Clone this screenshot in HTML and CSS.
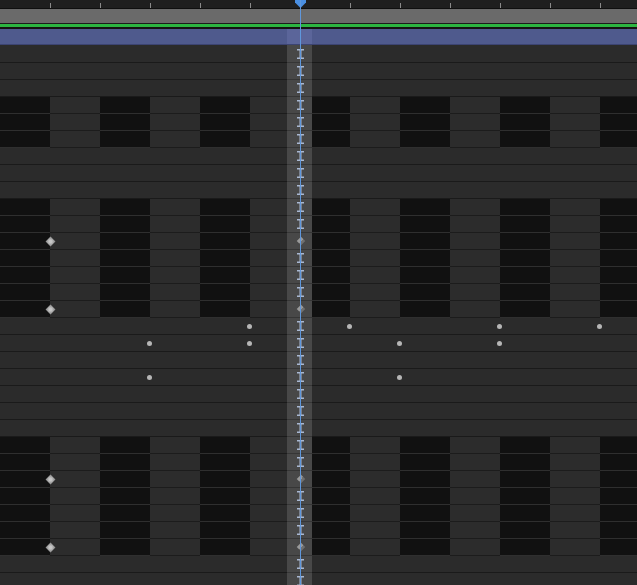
FILE: index.html
```html
<!DOCTYPE html>
<html>
<head>
  <title>Keyframe Timeline</title>
  <link rel="stylesheet" href="styles.css">
</head>
<body>
  <div class="timeline">
    <div class="ruler"></div>
    <div class="range-bar"></div>
    <div class="green-bar"></div>
    <div class="clip-bar">
      <div></div>
      <div class="clip-playhead"></div>
      <div></div>
    </div>
    <div class="tracks" id="tracks"></div>

    <div class="playhead">
      <svg class="playhead-head" width="11" height="8" viewBox="0 0 11 8">
        <path d="M0 0H11V2.5L5.5 8L0 2.5Z"/>
      </svg>
      <div class="playhead-line"></div>
    </div>
  </div>

  <script>
    const ROW_COUNT = 32;
    const checkered = [3, 4, 5, 9, 10, 11, 12, 13, 14, 15, 23, 24, 25, 26, 27, 28, 29];
    const diamondRows = [11, 15, 25, 29];
    const dots = {
      16: [249, 349, 499, 599],
      17: [149, 249, 399, 499],
      19: [149, 399]
    };

    const ibeam = '<svg class="ibeam" width="7" height="10" viewBox="0 0 7 10">' +
      '<rect x="0" y="0" width="7" height="1.5"/>' +
      '<rect x="0" y="8.5" width="7" height="1.5"/>' +
      '<rect x="2.5" y="0" width="2" height="10"/></svg>';

    const tracks = document.getElementById('tracks');

    for (let i = 0; i < ROW_COUNT; i++) {
      const row = document.createElement('div');
      row.className = 'track';
      if (checkered.includes(i)) row.classList.add('track-alt');
      if (i === 0) row.classList.add('track-first');

      const left = document.createElement('div');
      const mid = document.createElement('div');
      const right = document.createElement('div');
      mid.className = 'track-playhead';

      if (diamondRows.includes(i)) {
        mid.innerHTML = '<span class="diamond diamond-dim"></span>';
        const key = document.createElement('span');
        key.className = 'diamond key';
        key.style.left = '47px';
        row.appendChild(key);
      } else {
        mid.innerHTML = ibeam;
      }

      (dots[i] || []).forEach(function (x) {
        const dot = document.createElement('span');
        dot.className = 'dot key';
        dot.style.left = (x - 2) + 'px';
        row.appendChild(dot);
      });

      row.prepend(left, mid, right);
      tracks.appendChild(row);
    }
  </script>
</body>
</html>
```

FILE: styles.css
```css
body {
  margin: 0;
  background-color: #2b2b2b;
  font-family: "Liberation Sans", Arial, sans-serif;
  overflow: hidden;
}

.timeline {
  position: relative;
  width: 637px;
  height: 585px;
  overflow: hidden;
}

/* top ruler with a tick every 50px */
.ruler {
  height: 8px;
  padding-left: 50px;
  background-image:
    linear-gradient(to right, #8a8a8a 0 1px, transparent 1px 50px),
    linear-gradient(#1f1f1f, #1f1f1f);
  background-size: 50px 5px, 100% 100%;
  background-position: 0 3px, 0 0;
  background-repeat: repeat-x, no-repeat;
  background-origin: content-box, border-box;
  background-clip: content-box, border-box;
  border-bottom: 1px solid #0f0f0f;
}

.range-bar {
  height: 14px;
  background-color: #6a6a6a;
  border-bottom: 1px solid #1b1b1b;
}

.green-bar {
  height: 3px;
  background-color: #2cb541;
  border-bottom: 2px solid #141414;
}

.clip-bar {
  display: grid;
  grid-template-columns: 287px 25px 1fr;
  height: 15px;
  background-color: #4f5a8d;
  border-bottom: 1px solid #3c4472;
}

.clip-playhead {
  background-color: #5b659a;
}

/* track rows */
.track {
  position: relative;
  display: grid;
  grid-template-columns: 287px 25px 1fr;
  height: 17px;
  background-image: linear-gradient(to top, #1a1a1a 0 1px, #2b2b2b 1px);
}

.track-first {
  height: 18px;
}

.track-alt {
  background-image:
    repeating-linear-gradient(to right, #2f2f2f 0 50px, #1c1c1c 50px 100px),
    repeating-linear-gradient(to right, #111111 0 50px, #2c2c2c 50px 100px);
  background-size: 100% 1px, 100% 100%;
  background-position: 0 100%, 0 0;
  background-repeat: no-repeat;
}

.track-playhead {
  display: flex;
  align-items: center;
  justify-content: center;
  padding-left: 2px;
  padding-bottom: 1px;
  background-image: linear-gradient(to top, #363636 0 1px, #484848 1px);
}

.ibeam {
  fill: #a9b8d2;
}

.diamond {
  display: block;
  width: 7px;
  height: 7px;
  transform: rotate(45deg);
  background: radial-gradient(circle, #c6c6c6 0 25%, #979797 75%);
}

.diamond-dim {
  width: 6px;
  height: 6px;
  background: linear-gradient(90deg, #9a9a9a 50%, #707070 50%);
}

.key {
  position: absolute;
  top: 5px;
}

.dot {
  width: 5px;
  height: 5px;
  top: 6px;
  border-radius: 50%;
  background-color: #b6b6b6;
}

/* playhead drawn over everything */
.playhead {
  position: absolute;
  top: 0;
  bottom: 0;
  left: 295px;
  width: 11px;
}

.playhead-head {
  position: absolute;
  top: 0;
  left: 0;
  fill: #4a8fe2;
}

.playhead-line {
  position: absolute;
  top: 0;
  bottom: 0;
  left: 5px;
  width: 1px;
  background-color: #5f97dc;
}
```
